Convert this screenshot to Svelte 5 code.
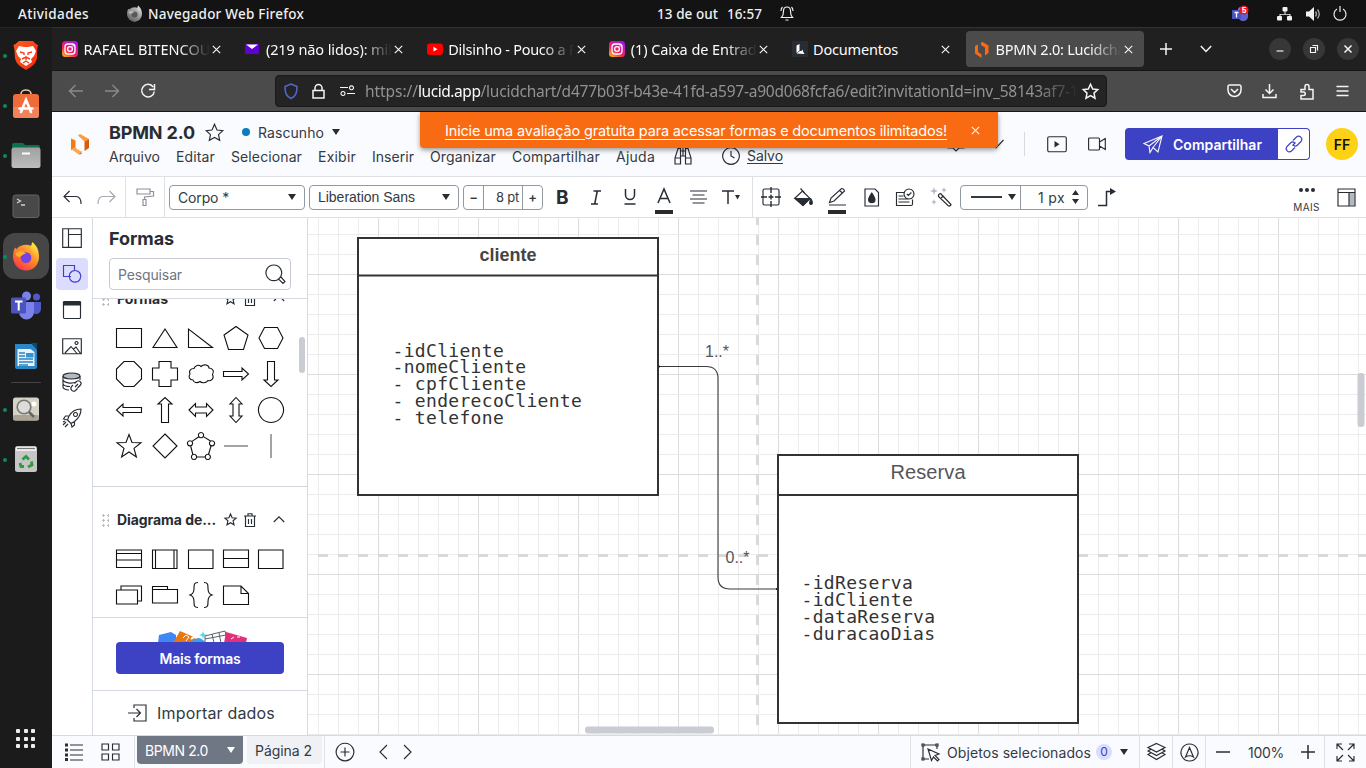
<script>
  // Spreads the letters of a label over a fixed measure.
  function fit(node, width) {
    node.style.letterSpacing = '0px';
    const natural = node.getBoundingClientRect().width;
    const count = [...node.textContent].length;
    node.style.letterSpacing = (width - natural) / count + 'px';
  }

  const tabs = [
    { icon: 'insta', text: 'RAFAEL BITENCOU', w: 127 },
    { icon: 'mail', text: '(219 não lidos): mil', w: 126 },
    { icon: 'tube', text: 'Dilsinho - Pouco a F', w: 128 },
    { icon: 'insta', text: '(1) Caixa de Entrad', w: 126 },
    { icon: 'lucid', text: 'Documentos', w: 85 },
    { icon: 'hex', text: 'BPMN 2.0: Lucidcha', w: 130, active: true }
  ];

  const menu = [
    ['Arquivo', 51, 67], ['Editar', 39, 55], ['Selecionar', 71, 87], ['Exibir', 38, 54],
    ['Inserir', 42, 58], ['Organizar', 66, 82], ['Compartilhar', 88, 104], ['Ajuda', 39, 58]
  ];

  const shapes = [
    'M1.5 4.5h25v19h-25z',
    'M14 5L26 23.500H2z',
    'M1.500 5v18.500h24z',
    'M14 2.500L26 11l-4.500 14.500h-15L2 11z',
    'M7.500 3.500h13L26 14l-5.500 10.500h-13L2 14z',
    'M9 1.500h10l7.500 7.500v10L19 26.500H9L1.500 19V9z',
    'M8 1.500h12V8h6.500v12H20v6.500H8V20H1.500V8H8z',
    'M7 8.500C8 5 12 4.500 14 6.500c3-3 8-1.500 8 1.500 4 0 5.500 4 3.500 6.500 2 3.500-1 7-4.500 6-1.500 2.500-6 3-8 1-3 2-6.500 1-7-1.500-3.500 0-5-3.500-3-6-1.500-3 .5-5.500 4-5.500z',
    'M1.500 11.500H20V8l6.500 6-6.500 6v-3.500H1.500z',
    'M10.500 1.500h7V20H21l-7 6.500L7 20h3.500z',
    'M26.500 11.500H8V8l-6.500 6L8 20v-3.500h18.500z',
    'M10.500 26.500h7V8H21l-7-6.500L7 8h3.500z',
    'M2 14l6.500-6.500v3.500h11V7.500L26 14l-6.500 6.500V17h-11v3.500z',
    'M14 1.500L20 8h-3v12h3l-6 6.500L8 20h3V8H8z',
    'M14 1.500a12.500 12.500 0 1 0 .01 0z',
    'M14 2.500l3 8 9 .3-7 5.600 2.400 8.600L14 20l-7.400 5L9 16.400 2 10.800l9-.3z',
    'M14 2l12 12-12 12L2 14z',
    'M11.900 4.800L5 9.400M3.500 13.500l2.500 9.500M9 25h9.500M21.500 22.500l2.500-8.500M23.500 9L16.500 4.600M14 .5a2.600 2.600 0 1 0 .01 0M3 8.700a2.600 2.600 0 1 0 .01 0M25 8.700a2.600 2.600 0 1 0 .01 0M7 22.300a2.600 2.600 0 1 0 .01 0M20.800 22.300a2.600 2.600 0 1 0 .01 0',
    'M2 14h24',
    'M14 2v24'
  ];
  const classShapes = [
    'M1.500 5h25v17.500h-25zM1.500 8.500h25M1.500 15h25',
    'M1.500 5h24.500v18.500H1.500zM4.500 5v18.500M23 5v18.500',
    'M1.500 5h24.500v18.500H1.500z',
    'M1.500 5h25v17.500h-25zM1.500 13.500h25',
    'M1.500 5h24.500v18.500H1.500z',
    'M1.500 9h21v14h-21zM6 9V5h20.500v15h-4',
    'M1.500 8.500h25v13.500h-25zM1.500 8.500V5.500h15v3',
    'M11 1.500c-4 0-4 2-4 6 0 4-1 5.500-4 6.500 3 1 4 2.500 4 6.500 0 4 0 6 4 6M17 1.500c4 0 4 2 4 6 0 4 1 5.500 4 6.500-3 1-4 2.500-4 6.500 0 4 0 6-4 6',
    'M1.500 5h17.500l7.500 7.500v11h-25zM19 5v7.500h7.500'
  ];
</script>

{#snippet ico(w, h, d, cls = '')}
  <svg class={'i ' + cls} width={w} height={h} viewBox="0 0 {w} {h}"><path {d} /></svg>
{/snippet}

{#snippet favicon(kind)}
  <svg width="17" height="17" viewBox="0 0 17 17">
    {#if kind === 'insta'}
      <rect width="16" height="16" rx="3.500" fill="url(#ig)" />
      <rect x="3" y="3" width="10" height="10" rx="3" fill="none" stroke="#fff" stroke-width="1.300" />
      <circle cx="8" cy="8" r="2.400" fill="none" stroke="#fff" stroke-width="1.300" />
      <circle cx="11" cy="5" r=".7" fill="#fff" />
    {:else if kind === 'mail'}
      <path d="M1 3h14v10H1z" fill="#5f01d1" /><path d="M2 3.500h12L8 8z" fill="#fff" />
    {:else if kind === 'tube'}
      <rect x="0" y="2.500" width="16" height="11.500" rx="3" fill="#f00" /><path d="M6.500 5.800l4 2.400-4 2.400z" fill="#fff" />
    {:else if kind === 'lucid'}
      <path d="M0 0h16v16H0z" fill="#282c33" /><path d="M4.500 4.500L7.500 3v6.500l-3 2.500zM4.500 12.500l3.500-2.500h1.500L11 8.500v2l1.500 2.500z" fill="#fff" />
    {:else}
      <path d="M1 5l3-1.500V11l3.500 2.500V17L1 12.500zM7 1.500L8.500 1l6 3.500V12L11 14.500v-8L7 4z" fill="#f96b13" />
    {/if}
  </svg>
{/snippet}

{#snippet fox(s)}
  <svg width={s} height={s} viewBox="0 0 28 28">
    <circle cx="14" cy="15.500" r="12" fill="url(#ff)" />
    <path d="M2 14c0-4 1-7 2-8l2 3c2-1 4-1 5 0l3 3-4 3c-2 6 4 9 9 6 5-4 3-9 0-12-1-3 0-6 1-8 3 3 6 6 6 13 0 8-6 13-12 13S2 21 2 14z" fill="url(#fy)" />
    <circle cx="14" cy="15.500" r="5" fill="#7542e5" />
    <path d="M4 12c3-3 7-3 10 0-3 0-4 2-6 3-1 0-3-1-4-3z" fill="#ffb02e" />
  </svg>
{/snippet}

<svg class="defs" width="0" height="0">
  <defs>
    <linearGradient id="ig" x1="0" y1="1" x2=".7" y2="0"><stop offset="0" stop-color="#fc0" /><stop offset=".45" stop-color="#f2225f" /><stop offset="1" stop-color="#b010e8" /></linearGradient>
    <linearGradient id="ff" x1="0" y1="1" x2="1" y2="0"><stop offset="0" stop-color="#f0245a" /><stop offset=".5" stop-color="#ff7a2b" /><stop offset="1" stop-color="#ffe23d" /></linearGradient>
    <linearGradient id="fy" x1=".2" y1="1" x2=".8" y2="0"><stop offset="0" stop-color="#ff2f4f" /><stop offset=".5" stop-color="#ff8a24" /><stop offset="1" stop-color="#fff04a" /></linearGradient>
    <linearGradient id="gr" x1="0" y1="0" x2="0" y2="1"><stop offset="0" stop-color="#a0a0a0" /><stop offset="1" stop-color="#bdbdbd" /></linearGradient>
    <linearGradient id="br" x1="0" y1="0" x2="1" y2="1"><stop offset="0" stop-color="#ff5a1f" /><stop offset="1" stop-color="#f92a0c" /></linearGradient>
  </defs>
</svg>

<div class="screen">
  <header class="gnome">
    <span class="t"><b use:fit={71}>Atividades</b></span>
    <span class="gray">{@render fox(17)}</span>
    <span class="t"><b use:fit={156}>Navegador Web Firefox</b></span>
    <span class="t"><b use:fit={61}>13 de out</b></span>
    <span class="t"><b use:fit={35}>16:57</b></span>
    {@render ico(14, 17, 'M1.500 12.500c2-2 2-4 2-6.500 0-2.500 1.500-4 3.500-4s3.500 1.500 3.500 4c0 2.500 0 4.500 2 6.500zM5.500 15h3M1 6c0-2 .5-3 1.500-4M13 6c0-2-.5-3-1.500-4', 'lt')}
    <svg width="18" height="18" viewBox="0 0 18 18"><circle cx="9" cy="5" r="3" fill="#7b83eb" /><path d="M7 6h9v6a5 5 0 0 1-9 2z" fill="#5b62cc" /><path d="M0 5h9v9H0z" fill="#4b53bc" /><path d="M2.500 7.500h4M4.500 7.500v5" stroke="#fff" stroke-width="1.300" /><circle cx="12" cy="5" r="4.500" fill="#e8131b" /><text x="9.700" y="8.200" font-size="8.500" font-weight="700" fill="#fff" font-family="Liberation Sans, sans-serif">5</text></svg>
    <svg width="16" height="14" viewBox="0 0 16 14" fill="#f2f2f2"><rect x="5.500" y="0" width="5" height="4.500" rx="1" /><rect x="0" y="9" width="5" height="4.500" rx="1" /><rect x="10" y="9" width="5" height="4.500" rx="1" /><path d="M7.500 4h1v3h5v2h-1V7.800h-9V9h-1V7h5z" /></svg>
    <svg width="16" height="14" viewBox="0 0 16 14"><path d="M0 4.500h3L8 0v14L3 9.500H0z" fill="#f2f2f2" /><path d="M9.500 4.500q2 2.500 0 5M11.500 2.500q3.500 4.500 0 9" fill="none" stroke="#aaa" stroke-width="1.300" /></svg>
    {@render ico(14, 15, 'M4 3a6 6 0 1 0 6 0M7 0v6', 'lt')}
  </header>

  <div class="desktop">
    <nav class="dock">
      <div class="app run"><svg width="28" height="32" viewBox="0 0 28 32"><path d="M7 2h14l3 3 2 1-1 5 0 8c-1 6-6 9-11 12C9 28 4 25 3 19L2.500 11 1.500 6l2-1z" fill="url(#br)" /><path d="M7 7l5 1h4l5-1 3 5-2 5-3 3 1 3-6 4-6-4 1-3-3-3-2-5z" fill="#fff" /><path d="M8 13l4 1v2M20 13l-4 1v2M10 20l4-2 4 2M14 17v4M11 24l3-2 3 2" fill="none" stroke="#f8401c" stroke-width="1.400" /></svg></div>
      <div class="app run"><svg width="28" height="30" viewBox="0 0 28 30"><path d="M9 6V4a5 4 0 0 1 10 0v2" fill="none" stroke="#d9c9a8" stroke-width="1.600" /><rect x="1" y="4" width="26" height="24" rx="3" fill="#ef6b3a" /><path d="M1 17h26v8a3 3 0 0 1-3 3H4a3 3 0 0 1-3-3z" fill="#f2825a" /><path d="M9 22l5-12 5 12M7.500 18.500h13" fill="none" stroke="#fff" stroke-width="2.600" stroke-linecap="round" /></svg></div>
      <div class="app run"><svg width="30" height="28" viewBox="0 0 30 28"><path d="M1 10V4a2 2 0 0 1 2-2h9l2 2h13a2 2 0 0 1 2 2v5z" fill="#0f7050" /><rect x=".5" y="6.500" width="29" height="20.500" rx="2.500" fill="url(#gr)" /><path d="M11 12.500h8" stroke="#fff" stroke-width="2" /></svg></div>
      <div class="app"><svg width="28" height="26" viewBox="0 0 28 26"><rect x="1" y="2" width="26" height="22.500" rx="2.500" fill="#484848" stroke="#646464" /><path d="M5 6l3.500 2L5 10M9 12h4" fill="none" stroke="#d0d0d0" stroke-width="1.300" /></svg></div>
      <div class="app run on">{@render fox(30)}</div>
      <div class="app"><svg width="32" height="30" viewBox="0 0 32 30"><circle cx="16.500" cy="5" r="4.500" fill="#7b83eb" /><circle cx="26.500" cy="6" r="3.500" fill="#5059c9" /><path d="M21 11h10v7a5 5 0 0 1-8 4z" fill="#5059c9" /><path d="M9 11h15v10a7.500 7.500 0 0 1-15 0z" fill="#7b83eb" /><rect x="1" y="6.500" width="15" height="16" rx="1.500" fill="#4b53bc" /><path d="M5 10.500h7.500M8.700 10.500v9" stroke="#fff" stroke-width="2" /></svg></div>
      <div class="app"><svg width="24" height="28" viewBox="0 0 24 28"><path d="M1 2h17l5 5v18a2 2 0 0 1-2 2H3a2 2 0 0 1-2-2z" fill="#2d86c4" /><path d="M17 1h6v7z" fill="#0a4a73" /><path d="M3.500 7h13l4 3v14h-17z" fill="#e7f2fa" /><path d="M5 11h6M5 14h6M5 17h14M5 20h14M5 23h9" stroke="#2d86c4" stroke-width="1.300" /><rect x="12" y="11" width="7.500" height="4.500" fill="#3394d0" /></svg></div>
      <div class="sep"></div>
      <div class="app run"><svg width="28" height="26" viewBox="0 0 28 26"><rect x="1" y="1.500" width="26" height="23" rx="2.500" fill="#d6d2c4" /><rect x="1" y="19" width="26" height="5.500" rx="2" fill="#a9a493" /><circle cx="12" cy="11" r="6.800" fill="#dcdcda" stroke="#777" stroke-width="1.600" /><path d="M17 16l5 5" stroke="#666" stroke-width="2.500" /><circle cx="22" cy="8" r="2.500" fill="#fff" /></svg></div>
      <div class="app run"><svg width="24" height="28" viewBox="0 0 24 28"><rect x="1" y="1" width="22" height="26" rx="2.500" fill="#c6c6c6" /><path d="M2 2h20v4H2z" fill="#eee" /><path d="M3 3.500h18" stroke="#777" stroke-width="1.200" /><path d="M8.500 14.500l3.500-3 3 3M17.500 16.500l.5 3.500-4 2M10 21.500H7L6 18" fill="none" stroke="#2f9b3c" stroke-width="2.800" /></svg></div>
      <div class="apps">{#each Array(9) as _}<i></i>{/each}</div>
    </nav>

    <main class="browser">
      <div class="tabs">
        {#each tabs as tab}
          <div class="tab" class:active={tab.active}>
            <span class="fav">{@render favicon(tab.icon)}</span>
            <span class="label" class:fade={tab.w > 100}><b use:fit={tab.w}>{tab.text}</b></span>
            {@render ico(9, 9, 'M.8.8l7.400 7.400M8.200.8L.8 8.200', 'lt')}
          </div>
        {/each}
        <div class="tabtools">
          {@render ico(12, 12, 'M6 0v12M0 6h12', 'lt thick')}
          {@render ico(12, 8, 'M.8 1l5.200 5.500L11.200 1', 'lt thick')}
          <span class="win">{@render ico(10, 10, 'M1.500 7h7', 'lt')}</span>
          <span class="win">{@render ico(10, 10, 'M1.500 3.500h5v5h-5zM3.500 1.500h5v5', 'lt')}</span>
          <span class="win">{@render ico(10, 10, 'M1.500 1.500l7 7M8.500 1.500l-7 7', 'lt thick')}</span>
        </div>
      </div>

      <div class="nav">
        {@render ico(16, 14, 'M15 7H1.500M7.500 1L1.500 7l6 6', 'dim')}
        {@render ico(16, 14, 'M0 7h13.500M7.500 1l6 6-6 6', 'dim')}
        {@render ico(17, 16, 'M13.200 4A6.300 6.300 0 1 0 14.300 8.500M14.500 1v5.500H9', 'lt thick')}
        <div class="url">
          {@render ico(16, 17, 'M8 1l6 2.500c0 6-1 9.500-6 12-5-2.500-6-6-6-12z', 'shield')}
          {@render ico(13, 16, 'M1 7.500h11v7.500H1zM3 7.500V5a3.500 3.500 0 0 1 7 0v2.500', 'lt thick')}
          {@render ico(15, 12, 'M0 2.500h8M11.500.8a2 2 0 1 0 .01 0M15 8.500H7M3 6.500a2 2 0 1 0 .01 0', 'lt')}
          <span class="addr"><b use:fit={53}>https://</b><b class="host" use:fit={62.5}>lucid.app</b><b use:fit={598}>/lucidchart/d477b03f-b43e-41fd-a597-a90d068fcfa6/edit?invitationId=inv_58143af7-1</b></span>
          {@render ico(17, 17, 'M8.500 1.300l2.200 4.700 5 .6-3.700 3.500 1 5.100-4.500-2.500L4 15.200l1-5.100L1.300 6.600l5-.6z', 'lt thick')}
        </div>
        {@render ico(15, 14, 'M2.500 1h10A1.500 1.500 0 0 1 14 2.500V6a6.500 6.500 0 0 1-13 0V2.500A1.500 1.500 0 0 1 2.500 1zM4 5l3.500 3.500L11 5', 'lt thick')}
        {@render ico(15, 16, 'M7.500 1v9M3.500 6.500l4 4 4-4M1 11v3.500h13V11', 'lt thick')}
        {@render ico(14, 17, 'M1 6.500h4V3.500a2 2 0 0 1 4 0v3h4V16H1v-3.500h2.500a1.700 1.700 0 0 0 0-3.500H1z', 'lt thick')}
        {@render ico(13, 12, 'M.5 1.500h12M.5 6h12M.5 10.500h12', 'lt thick')}
      </div>

      <div class="lucid">
        <div class="head">
          <div class="logo"><svg width="20" height="24" viewBox="0 0 20 24"><path d="M1 6.500l4.500 2V16l-4 2.500L1 17z" fill="#f47a17" /><path d="M1 17l4-1.500 6 4-1.500 3.500z" fill="#ffa64d" /><path d="M9.500 22.500L11.500 19v3z" fill="#d95b07" /><path d="M8 3.500L10 2l9 5-4.500 2.500z" fill="#ff9a3d" /><path d="M14.500 9.500L19 7v9l-4.500 3z" fill="#d95b07" /></svg></div>
          <div class="titles">
            <div class="title">
              <strong><b use:fit={86}>BPMN 2.0</b></strong>
              {@render ico(19, 18, 'M9.500 1.300L12 7l5.800.6-4.300 4 1.200 5.700-5.200-2.900-5.200 2.900 1.200-5.700-4.300-4L7 7z', 'star')}
              <i class="dot"></i>
              <span><b use:fit={66}>Rascunho</b></span>
              <i class="caret"></i>
            </div>
            <div class="menu">
              {#each menu as [name, w, step]}<span style="width:{step}px"><b use:fit={w}>{name}</b></span>{/each}
              {@render ico(18, 18, 'M1 11v6h5.500V1.500H4zM17 11v6h-5.500V1.500H14zM6.500 4h5M6.500 9h5M1 11h5.500M11.500 11H17M9 1v8', 'bino')}
              {@render ico(18, 18, 'M9 .7a8.300 8.300 0 1 0 .01 0M9 4v5l3.500 2', 'clock')}
              <span class="salvo"><b use:fit={36}>Salvo</b></span>
            </div>
          </div>
          <div class="actions">
            {@render ico(18, 18, 'M1 2h16v11h-5l-3 3-3-3H1z', 'cmt')}
            {@render ico(13, 10, 'M1 5l4 4 7.500-8', 'chk')}
            <i class="rule"></i>
            <svg class="i" width="20" height="17" viewBox="0 0 20 17"><rect x=".7" y=".7" width="18.600" height="15" rx="1.500" /><path d="M7.500 5l5 3.300-5 3.300z" fill="#282c33" stroke="none" /></svg>
            {@render ico(18, 14, 'M1.500 1h9q1 0 1 1v10q0 1-1 1h-9q-.9 0-.9-1V2q0-1 .9-1zM11.500 5L17.300 1.500v11L11.500 9', 'cam')}
            <div class="share">
              {@render ico(20, 19, 'M1 8.500L19 1l-4 16-5-4.500-3 5-1-6.500zM6 11L19 1l-9 11.500', 'lt')}
              <span><b use:fit={89}>Compartilhar</b></span>
              <div class="link">{@render ico(18, 18, 'M7.500 10.500l3-3M8 5.500l3.500-3.500c3-2.500 7 1.500 4.500 4.500L12.500 10c-1.200 1.200-3 1.200-4 .3M10 12.500L6.500 16C3.500 18.500-.5 14.500 2 11.500L5.500 8c1.200-1.200 3-1.200 4-.3', 'blue')}</div>
            </div>
            <div class="avatar">FF</div>
          </div>
          <div class="banner">
            <b class="offer" use:fit={502}>Inicie uma avaliação gratuita para acessar formas e documentos ilimitados!</b>
            {@render ico(9, 9, 'M.8.8l7.400 7.400M8.200.8L.8 8.200', 'lt')}
          </div>
        </div>

        <div class="tools">
          {@render ico(19, 15, 'M6.500 1L1 6.500 6.500 12M1 6.500h12c4 0 5 3 5 7.500')}
          {@render ico(19, 15, 'M12.500 1L18 6.500 12.500 12M18 6.500H6C2 6.500 1 9.500 1 14', 'pale')}
          <i class="vr"></i>
          {@render ico(19, 18, 'M1 1h13v5H1zM14 3.500h3.500V8L8.500 9v2.500M7 11.500h3v6H7z', 'mute')}
          <i class="vr"></i>
          <div class="sel"><b use:fit={51}>Corpo *</b><i class="caret"></i></div>
          <div class="sel font"><b use:fit={97}>Liberation Sans</b><i class="caret"></i></div>
          <div class="num"><span>−</span><span class="mid"><b use:fit={23}>8 pt</b></span><span>+</span></div>
          <strong class="g">B</strong>
          {@render ico(12, 15, 'M3.500 1H11M1 14h7M7.300 1l-2.600 13', 'thick')}
          {@render ico(12, 16, 'M1.500 0v6a4.500 4.500 0 0 0 9 0V0M.5 15h11', 'thick')}
          <div class="under">{@render ico(18, 16, 'M3 15L9 1l6 14M5 10.500h8', 'thick')}<i></i></div>
          {@render ico(17, 14, 'M0 1h17M2.500 5h12M0 9h17M2.500 13h12')}
          <svg class="i thick" width="20" height="15" viewBox="0 0 20 15"><path d="M0 1h12M6 1v13" /><path d="M13 5h5l-2.500 4.500z" fill="#282c33" stroke="none" /></svg>
          <i class="vr"></i>
          <svg class="i" width="20" height="20" viewBox="0 0 20 20"><rect x="2" y="2" width="16" height="16" rx="1.500" /><path d="M10 0v6M10 14v6M0 10h6M14 10h6M10 7.500v5M7.500 10h5" stroke-width="1.400" /></svg>
          <svg class="i" width="20" height="20" viewBox="0 0 20 20"><path d="M1 11L8.500 4l7.500 7.500-7 7z" /><path d="M1 11.500h15l-7 7zM17 12c1.500 2.500 2 5.500 0 5.500s-1.500-3 0-5.500z" fill="#282c33" /><path d="M6.500 1.500l4 4.500" /></svg>
          <div class="under">{@render ico(18, 18, 'M1.500 14.500l1.500-4.500L13.500.5q2.500 0 3 2.500L6 13zM11.500 2.500L14.500 5M1 17h17')}<i></i></div>
          <svg class="i" width="16" height="19" viewBox="0 0 16 19"><path d="M1 1h10l3.500 3.500V18H1z" /><path d="M7.800 5c2 3 3.200 5 3.200 6.500a3.200 3.200 0 0 1-6.400 0C4.600 10 6 8 7.800 5z" fill="#282c33" /></svg>
          {@render ico(20, 19, 'M9 4.500H1.500v13H16q1.500 0 1.500-1.500v-4.500M3.500 8h5M3.500 11h10M3.500 14h11M14 1a5 5 0 1 0 .01 0M11.800 6l1.600 1.500 3-3')}
          <svg class="i" width="22" height="20" viewBox="0 0 22 20"><path d="M8.500 9.500q-.5-2.500 2-3l10.500 11q-.5 2-2.500 1.500z" /><path d="M11 11l2.500-2" /><path d="M4 0l1 3 3 1-3 1-1 3-1-3-3-1 3-1zM14 0l.8 2.200L17 3l-2.200.8L14 6l-.8-2.200L11 3l2.200-.8zM4 12l.8 2.200L7 15l-2.200.8L4 18l-.8-2.200L1 15l2.200-.8z" fill="#b5b8bd" stroke="none" /></svg>
          <div class="line"><span><i class="stroke"></i><i class="caret"></i></span><span><b use:fit={27}>1 px</b><svg width="7" height="14" viewBox="0 0 7 14"><path d="M3.500 0L7 5H0zM3.500 14L7 9H0z" fill="#282c33" /></svg></span></div>
          <svg class="i thick" width="18" height="19" viewBox="0 0 18 19"><path d="M0 17.500h8.500v-14H13" /><path d="M12 0l6 3.500L12 7z" fill="#282c33" stroke="none" /></svg>
          <div class="mais"><span><i></i><i></i><i></i></span><b use:fit={26.500}>MAIS</b></div>
          <svg class="i" width="19" height="19" viewBox="0 0 19 19"><path d="M12 5h5.500v12.500H12z" fill="#b4b8c0" stroke="none" /><path d="M1 1h17v17H1zM1 4.500h17M12 4.500V18" /></svg>
        </div>

        <div class="work">
          <aside class="rail">
            <div>{@render ico(20, 20, 'M.7.7h18.600v18.600H.7zM6.500.7v18.600M6.500 6.500h12.800')}</div>
            <div class="sel2">{@render ico(20, 20, 'M9 12.500H1.500v-11h11v5M13 6.500a5.800 5.800 0 1 0 .01 0', 'blue')}</div>
            <div><svg class="i" width="20" height="20" viewBox="0 0 20 20"><rect x="1.500" y="1.500" width="17" height="17" rx="1" /><path d="M1.500 2h17v3h-17z" fill="#282c33" /></svg></div>
            <div>{@render ico(20, 17, 'M.7.7h18.600v15H.7zM3 15l6-6.500 6 7M11.500 11L14 9l4.500 6.500M14.500 3.500a1.500 1.500 0 1 0 .01 0')}</div>
            <div><svg class="i" width="21" height="21" viewBox="0 0 21 21"><ellipse cx="9.500" cy="4" rx="8.500" ry="3" fill="#b4b8c0" /><path d="M1 4v11c0 1.500 2.500 3 6 3M18 4v4M1 8c1 3 9 4 13 2M1 12c1 2 4 2.500 7 2.500M13 15l3-3M12.500 11.500l2-2c2.500-2 6 1 4 3.500l-3 3M11 13l-1.500 1.500c-2 3 1.500 6 4 4l2-2" /></svg></div>
            <div>{@render ico(20, 20, 'M19 1c-6 0-9 2-12 7l-1.500 4L9 15.500l3.500-2C17 10 19 7 19 1zM7 8H3.500L1.500 11l4 1M12.500 13.500V17L10 19l-1-3.500M13.500 4.500a2 2 0 1 0 .01 0M4 14l-3 3M6 16l-3 3M3 13l-2 1')}</div>
          </aside>

          <aside class="panel">
            <h2><b use:fit={65}>Formas</b></h2>
            <div class="search"><b use:fit={64}>Pesquisar</b>{@render ico(21, 21, 'M8.800 1a7.800 7.800 0 1 0 .01 0M14.500 14l1.500-1 4 4.500-2 2-4.500-4.500z')}</div>
            <div class="scroll">
              <div class="sec first"><i class="grip"></i><strong><b use:fit={51}>Formas</b></strong>{@render ico(13, 13, 'M6.500 1l1.600 3.700 4 .4-3 2.700.9 4-3.500-2.100L3 11.800l.9-4-3-2.700 4-.4z')}{@render ico(12, 14, 'M1.500 3.500v10h9v-10M0 3h12M4 3V.7h4V3M4.500 6v5M7.500 6v5')}{@render ico(12, 7, 'M.8 6L6 .8 11.200 6')}</div>
              <div class="shapes">{#each shapes as d, n}<span>{@render ico(28, 28, d, n > 17 ? 'blk soft' : 'blk')}</span>{/each}</div>
              <div class="sec"><i class="grip"></i><strong><b use:fit={99}>Diagrama de...</b></strong>{@render ico(13, 13, 'M6.500 1l1.600 3.700 4 .4-3 2.700.9 4-3.500-2.100L3 11.800l.9-4-3-2.700 4-.4z')}{@render ico(12, 14, 'M1.500 3.500v10h9v-10M0 3h12M4 3V.7h4V3M4.500 6v5M7.500 6v5')}{@render ico(12, 7, 'M.8 6L6 .8 11.200 6')}</div>
              <div class="shapes two">{#each classShapes as d}<span>{@render ico(28, 28, d, 'blk')}</span>{/each}</div>
              <i class="thumb"></i>
            </div>
            <div class="more">
              <svg width="92" height="14" viewBox="0 0 92 14"><path d="M2 6l12-3 5 3v8H1z" fill="#3f87f5" /><path d="M16 14L23 2l16 7-2 5z" fill="#e8770f" /><path d="M26 9l3-3 3 2-3 4" fill="none" stroke="#fff" /><path d="M33 14q8-10 16 0z" fill="#3ba0ea" /><path d="M34 10q3-3 6-1" stroke="#fff" fill="none" stroke-width="2" /><path d="M46 2l1 3 3 1-3 1-1 3-1-3-3-1 3-1z" fill="#4bd6ee" /><path d="M48 14L48 7l20-5 3 12M48 10l21-4M55 5l2 9M62 4l2 10" fill="#fff" stroke="#5a6270" /><path d="M67 14l2-11 21 6-1 5z" fill="#e0307a" /><path d="M74 10l3-2M80 8h3" stroke="#fff" /></svg>
              <button><b use:fit={81}>Mais formas</b></button>
            </div>
            <div class="import">{@render ico(19, 18, 'M0 9h12M8.500 5L12.500 9l-4 4M6 4V1h12v16H6v-3')}<span><b use:fit={118}>Importar dados</b></span></div>
          </aside>

          <section class="canvas">
            <svg width="1058" height="517" viewBox="308 218 1058 517">
              <g shape-rendering="crispEdges">
                {#each Array(53) as _, i}<path d="M{318.500 + i * 20} 218v517" stroke={(i - 3) % 5 === 0 ? '#dcdcdc' : '#ececec'} />{/each}
                {#each Array(26) as _, i}<path d="M308 {234.500 + i * 20}h1058" stroke={(i - 2) % 5 === 0 ? '#dcdcdc' : '#ececec'} />{/each}
                <path d="M757.500 215v520M318 555.500h1048" stroke="#d9d9d9" stroke-width="3" stroke-dasharray="10 10" />
              </g>
              <path d="M659 366.500h47q12 0 12 12V577q0 12 12 12h48" fill="none" stroke="#3a3a3f" stroke-width="1.100" />
              <circle cx="659" cy="366.500" r="1" /><circle cx="777" cy="589" r="1" />
              <g fill="#fff" stroke="#333336" stroke-width="2">
                <path d="M358 238h300v257H358zM358 275.500h300" /><path d="M778 455h300v268H778zM778 495h300" />
              </g>
              <g class="names"><text x="479.500" y="260.500" textLength="57" class="bold">cliente</text><text x="890.500" y="479" textLength="75" class="res">Reserva</text><text x="705" y="356.500" textLength="24">1..*</text><text x="725.500" y="563" textLength="24">0..*</text></g>
              <g class="mono">
                {#each ['-idCliente', '-nomeCliente', '- cpfCliente', '- enderecoCliente', '- telefone'] as line, i}<text x="392.500" y={356.500 + i * 16.900}>{line}</text>{/each}
                {#each ['-idReserva', '-idCliente', '-dataReserva', '-duracaoDias'] as line, i}<text x="801.500" y={589 + i * 16.900}>{line}</text>{/each}
              </g>
              <rect x="1357.500" y="373" width="7" height="54" rx="3" fill="#c9ccd2" /><rect x="585" y="726.500" width="129" height="7" rx="3" fill="#c9ccd2" />
            </svg>
          </section>
        </div>

        <footer>
          <svg class="i" width="19" height="18" viewBox="0 0 19 18"><path d="M5 2h13M5 7h13M5 12h13M5 17h13" /><path d="M0 .5h3v3H0zM0 5.500h3v3H0zM0 10.500h3v3H0zM0 15h3v3H0z" fill="#282c33" stroke="none" /></svg>
          {@render ico(19, 18, 'M1 1h6.500v6H1zM11.500 1H18v6h-6.500zM1 11h6.500v6H1zM11.500 11H18v6h-6.500z')}
          <i class="vr"></i>
          <div class="pg cur"><b use:fit={63}>BPMN 2.0</b><i class="caret"></i></div>
          <div class="pg"><b use:fit={57}>Página 2</b></div>
          <i class="vr"></i>
          {@render ico(20, 20, 'M10 1.200a8.800 8.800 0 1 0 .01 0M10 5.500v9M5.500 10h9')}
          {@render ico(10, 16, 'M9 1L2 8l7 7')}
          {@render ico(10, 16, 'M1 1l7 7-7 7')}
          <i class="vr"></i>
          {@render ico(19, 19, 'M1 1h2v2H1zM15 1h2v2h-2zM1 15h2v2H1zM3 2h12M2 3v12M16 3v3M3 16h5M7 6l11 5-4 1.500 4 4-1.500 1.500-4-4-2 3.500z')}
          <span class="obj"><b use:fit={144}>Objetos selecionados</b></span>
          <span class="badge">0</span>
          <i class="caret"></i>
          <i class="vr"></i>
          {@render ico(19, 20, 'M9.500 1.500l8.500 4-8.500 4.500L1 5.500zM4 7.200L1 9l8.500 4.500L18 9l-3-1.800M4 10.700l-3 1.800L9.500 17.500l8.500-5-3-1.800')}
          <i class="vr"></i>
          {@render ico(19, 19, 'M9.500 1a8.500 8.500 0 1 0 .01 0M9.500 4.500l4 9.500q-4-2.500-8 0z')}
          <i class="vr"></i>
          {@render ico(14, 14, 'M0 7h14', 'thick')}
          <span class="obj"><b use:fit={36}>100%</b></span>
          {@render ico(14, 14, 'M0 7h14M7 0v14', 'thick')}
          <i class="vr"></i>
          {@render ico(19, 19, 'M1 6V1h5M1 1l6 6M13 1h5v5M18 1l-6 6M18 13v5h-5M18 18l-6-6M6 18H1v-5M1 18l6-6')}
        </footer>
      </div>
    </main>
  </div>
</div>

<style>
  :global(body) { margin: 0; overflow: hidden; }
  * { box-sizing: border-box; }
  b { font-weight: inherit; white-space: pre; display: inline-block; }
  svg { display: block; flex: none; overflow: visible; }
  .defs { position: absolute; }
  .screen { width: 1366px; height: 768px; display: flex; flex-direction: column; background: #131313; font-family: Inter, sans-serif; color: #333a44; overflow: hidden; }
  .i { fill: none; stroke: #282c33; stroke-width: 1.15; }
  .i.thick { stroke-width: 1.5; }
  .i.lt { stroke: #f5f5f5; }
  .i.dim { stroke: #8b8b8b; stroke-width: 1.4; }
  .i.pale { stroke: #a5a9b0; }
  .i.mute { stroke: #8a8f98; }
  .i.blue { stroke: #3d41c4; }
  .i.blk { stroke: #111; stroke-width: 1.1; }
  .i.soft { stroke: #333; stroke-width: .9; }
  .i.shield { stroke: #5266c9; stroke-width: 1.6; }
  .caret { width: 0; height: 0; border: 4px solid transparent; border-top: 6px solid #282c33; border-bottom: 0; }

  .gnome { height: 27px; display: grid; grid-template-columns: 108px 22px 509px 70px 53px 452px 45px 29px 27px 1fr; align-items: center; padding-left: 18px; font: 500 13.5px 'Noto Sans', sans-serif; color: #f0f0f0; }
  .gray { filter: grayscale(1); }

  .desktop { height: 741px; display: flex; }
  .dock { width: 52px; background: #1b1b1b; padding-top: 2px; display: flex; flex-direction: column; border-top: 1px solid #242424; }
  .app { height: 50.200px; display: flex; align-items: center; justify-content: center; position: relative; }
  .app.run::before { content: ''; position: absolute; left: 3px; top: 24px; width: 4px; height: 4px; border-radius: 50%; background: #0d8a5f; }
  .app.on { margin: 2px 3px; height: 46px; background: #464646; border-radius: 12px; }
  .app.on::before { left: 0 !important; top: 22px !important; }
  .sep { height: 1px; background: #454545; margin: 1px 11px; }
  .apps { margin: auto 17px 20px 16px; display: grid; grid-template-columns: repeat(3, 4px); gap: 3.500px; }
  .apps i { height: 4px; border-radius: 1px; background: #ededed; }

  .browser { width: 1314px; display: flex; flex-direction: column; }
  .tabs { height: 43px; background: #202020; border-top: 1px solid #333; padding-left: 1px; display: flex; align-items: center; font: 14.5px 'Noto Sans', sans-serif; color: #fbfbfe; }
  .tab { width: 182.400px; height: 36px; padding: 0 14.500px 0 9px; display: flex; align-items: center; position: relative; }
  .tab.active { width: 178px; margin-left: 1px; padding: 0 11px 0 8px; background: #4b4b4b; border-radius: 4px; }
  .fav { width: 21.500px; }
  .label { width: 126px; overflow: hidden; margin-right: auto; }
  .fade { mask-image: linear-gradient(90deg, #000 75%, transparent 100%); }
  .tabtools { display: grid; grid-template-columns: 40px 69px 34px 34px 22px; padding-left: 16px; align-items: center; }
  .win { width: 22px; height: 22px; border-radius: 50%; background: #373737; display: grid; place-items: center; }

  .nav { height: 42px; background: #4b4b4b; border-top: 1px solid #161616; border-bottom: 1px solid #161616; padding-left: 16px; display: grid; grid-template-columns: 37px 35px 135px 952px 35px 38px 36px 1fr; align-items: center; }
  .url { width: 832px; height: 32px; border: 1px solid #191919; border-radius: 4px; background: #242424; padding-left: 7px; display: grid; grid-template-columns: 29px 28px 25px 717px 1fr; align-items: center; }
  .addr { width: 714px; overflow: hidden; white-space: nowrap; display: flex; font: 15.5px 'Noto Sans', sans-serif; color: #929292; mask-image: linear-gradient(90deg, #000 94%, transparent 100%); }
  .host { color: #fbfbfe; }

  .lucid { height: 656px; background: #fff; display: flex; flex-direction: column; }
  .head { height: 65px; background: #fafbfe; border-bottom: 1px solid #dde1e6; display: flex; position: relative; font-size: 14px; }
  .logo { width: 57px; padding: 20px 0 0 18px; }
  .titles { width: 830px; padding-top: 8px; }
  .title { height: 24px; display: grid; grid-template-columns: 96px 37px 16px 74px 1fr; align-items: center; }
  .title strong { font-size: 18px; font-weight: 700; color: #282c33; }
  .dot { width: 8px; height: 8px; border-radius: 50%; background: #0c7cc0; }
  .menu { height: 24px; display: flex; align-items: center; }
  .menu > :global(.bino) { margin-right: 30px; }
  .menu > :global(.clock) { margin-right: 7px; }
  .salvo { border-bottom: 1px solid #333a44; line-height: 15px; }
  .actions { display: grid; grid-template-columns: 44px 33px 23px 41px 37px 201px 1fr; align-items: center; padding-left: 8px; flex: 1; }
  .rule { width: 1px; height: 24px; background: #d5d9e0; }
  .share { width: 185px; height: 32px; border-radius: 4px; background: #3d41c4; color: #fff; display: flex; align-items: center; padding: 1px 1px 1px 18px; font-weight: 600; font-size: 14px; }
  .share span { margin-left: 10px; }
  .link { margin-left: auto; width: 31px; height: 30px; background: #fff; border-radius: 0 3px 3px 0; display: grid; place-items: center; }
  .avatar { width: 32px; height: 32px; border-radius: 50%; background: #fcd116; color: #111; font: 600 14px/33px Inter, sans-serif; text-align: center; }
  .banner { position: absolute; left: 368px; top: 0; width: 578px; height: 36px; background: #f96b13; border-radius: 0 0 4px 4px; box-shadow: 0 2px 5px #0006; color: #fff; display: flex; align-items: center; gap: 24px; padding-left: 25px; font-size: 14.500px; }
  .offer { text-decoration: underline; text-underline-offset: 3px; }

  .tools { height: 41px; border-bottom: 1px solid #dde1e6; padding-left: 11px; display: grid; grid-template-columns: 34px 28px 11px 28px 5px 140px 154px 93px 34px 34px 31px 35px 32px 30px 9px 33px 34px 36px 31px 35px 30px 138px 195px 44px 1fr; align-items: center; }
  .vr { width: 1px; align-self: stretch; background: #dde1e6; }
  .sel { width: 136px; height: 25px; border: 1px solid #9299a5; border-radius: 4px; display: flex; align-items: center; justify-content: space-between; padding: 0 8px; font-size: 14px; }
  .font { width: 150px; font-family: 'Liberation Sans', sans-serif; }
  .num { width: 80px; height: 25px; border: 1px solid #9299a5; border-radius: 4px; display: grid; grid-template-columns: 19px 40px 1fr; line-height: 23px; text-align: center; font-size: 13px; font-weight: 600; }
  .num .mid { border: solid #9299a5; border-width: 0 1px; padding-left: 9px; font-weight: 400; }
  .g { font-size: 19px; color: #282c33; }
  .under { height: 34px; width: 18px; padding-top: 8px; display: flex; flex-direction: column; justify-content: space-between; }
  .under i { height: 4px; flex: none; background: #2b2b2e; }
  .line { width: 128px; height: 25px; border: 1px solid #9299a5; border-radius: 4px; display: grid; grid-template-columns: 59px 1fr; font-size: 14px; }
  .line span { display: flex; align-items: center; justify-content: space-between; padding: 0 4px 0 10px; }
  .line span + span { border-left: 1px solid #9299a5; padding: 0 8px 0 17px; }
  .stroke { width: 31px; height: 2px; background: #333a44; }
  .mais { width: 27px; display: flex; flex-direction: column; align-items: center; font-size: 10px; padding-top: 7px; gap: 9px; line-height: 12px; }
  .mais span { display: flex; gap: 2px; }
  .mais i { width: 4px; height: 4px; border-radius: 50%; background: #282c33; }

  .work { height: 517px; display: flex; }
  .canvas { overflow: hidden; }
  .rail { width: 41px; border-right: 1px solid #d5d9e0; padding-top: 4px; display: flex; flex-direction: column; gap: 4px; align-items: center; }
  .rail div { width: 32px; height: 32px; display: grid; place-items: center; border-radius: 4px; }
  .rail .sel2 { background: #dcdcfc; }
  .panel { width: 215px; border-right: 1px solid #d5d9e0; }
  h2 { margin: 0; height: 40px; padding: 0 0 0 16px; font: 700 18px/42px Inter, sans-serif; color: #282c33; }
  .search { margin: 0 16px; height: 32px; border: 1px solid #c5cad4; border-radius: 4px; display: flex; align-items: center; justify-content: space-between; padding: 0 4px 0 8px; font-size: 14px; color: #6f7684; }
  .scroll { position: relative; margin-top: 8px; height: 320px; border: solid #d5d9e0; border-width: 1px 0; overflow: hidden; }
  .sec { height: 66px; border-top: 1px solid #d0d5dc; display: grid; grid-template-columns: 16px 107px 20px 29px 1fr; align-items: center; padding-left: 8px; font-size: 14px; color: #282c33; }
  .sec strong { font-weight: 700; }
  .sec.first { margin-top: -34px; }
  .grip { width: 8px; height: 14px; background: radial-gradient(circle, #b9bdc4 1px, transparent 1.300px) 0 0 / 5px 5px; }
  .shapes { display: grid; grid-template-columns: 36px 35.500px 35.500px 35px 36px; grid-auto-rows: 36px; padding-left: 22px; height: 165px; margin-top: -10px; }
  .shapes span { padding-top: 3px; }
  .shapes.two { margin-top: -10px; height: 80px; }
  .thumb { position: absolute; left: 206px; top: 38px; width: 6px; height: 36px; border-radius: 3px; background: #c9ccd2; }
  .more { height: 73px; padding: 11px 23px 0; border-bottom: 1px solid #d5d9e0; }
  .more svg { margin: 0 0 0 41px; }
  button { display: block; width: 168px; height: 32px; margin-top: -1px; border: 0; border-radius: 4px; background: #3d41c4; color: #fff; font: 600 14px Inter, sans-serif; position: relative; padding: 0; }
  .import { display: flex; align-items: center; height: 44px; padding-left: 35px; font-size: 16px; }
  .import span { margin-left: 10px; }
  .names { font: 16px 'Liberation Sans', sans-serif; fill: #55555a; }
  .bold { font-size: 18px; font-weight: 700; fill: #444; }
  .res { font-size: 20px; }
  .mono { font: 18px 'DejaVu Sans Mono', monospace; letter-spacing: .32px; fill: #333; white-space: pre; }
  .mono text { white-space: pre; }

  footer { height: 33px; background: #fafbfe; border-top: 1px solid #d5d9e0; display: grid; grid-template-columns: 36px 33px 3px 110px 77px 11px 43px 25px 507px 11px 26px 149px 24px 19px 8px 25px 8px 25px 11px 32px 53px 23px 12px 1fr; align-items: center; padding-left: 13px; font-size: 14px; }
  .pg { align-self: start; width: 75px; height: 28px; padding: 0 8px; border-radius: 0 0 4px 4px; background: #f0f1f5; display: flex; align-items: center; justify-content: space-between; }
  .cur { width: 106px; background: #6f7684; color: #fff; }
  .cur .caret { border-top-color: #fff; }
  .badge { width: 16px; height: 16px; border-radius: 50%; background: #dcdcfc; color: #3d41c4; font-size: 12px; line-height: 16px; text-align: center; }
</style>
